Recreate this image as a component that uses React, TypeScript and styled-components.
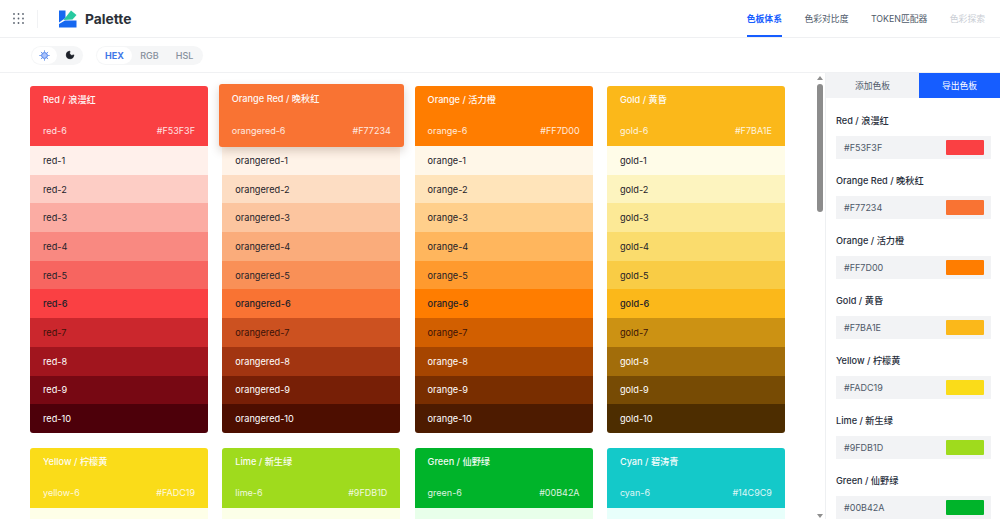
import styled, { createGlobalStyle } from "styled-components";
import { Moon } from "lucide-react";

const GlobalStyle = createGlobalStyle`
    html, body {
        margin: 0;
        height: 100%;
        background: #fff;
        font-family: Inter, "Noto Sans CJK SC", sans-serif;
    }
    #root {
        height: 100%;
    }
`;

const palettes = [
    { key: "red", title: "Red / 浪漫红", hex: "#F53F3F", fill: "#FA4043", shades: ["#FFF0EB", "#FDCDC5", "#FBACA3", "#F98981", "#F76560", "#FA4043", "#CB272D", "#A1151E", "#770813", "#4D000A"] },
    { key: "orangered", title: "Orange Red / 晚秋红", hex: "#F77234", fill: "#F97333", shades: ["#FFF3E8", "#FDDDC3", "#FCC59F", "#FAAC7B", "#F99057", "#F97333", "#CC5120", "#A23511", "#771F06", "#4D0E00"] },
    { key: "orange", title: "Orange / 活力橙", hex: "#FF7D00", fill: "#FF7D00", shades: ["#FFF7E8", "#FFE4BA", "#FFCF8B", "#FFB65D", "#FF9A2E", "#FF7D00", "#D25F00", "#A64500", "#792E00", "#4D1B00"] },
    { key: "gold", title: "Gold / 黄昏", hex: "#F7BA1E", fill: "#FBB81A", shades: ["#FFFCE8", "#FDF4BF", "#FCE996", "#FADC6D", "#F9CC45", "#FBB81A", "#CC9213", "#A26D0A", "#774B04", "#4D2D00"] },
    { key: "yellow", title: "Yellow / 柠檬黄", hex: "#FADC19", fill: "#FADC19", shades: ["#FEFFE8"] },
    { key: "lime", title: "Lime / 新生绿", hex: "#9FDB1D", fill: "#9FDB1D", shades: ["#FCFFE8"] },
    { key: "green", title: "Green / 仙野绿", hex: "#00B42A", fill: "#00B42A", shades: ["#E8FFEA"] },
    { key: "cyan", title: "Cyan / 碧涛青", hex: "#14C9C9", fill: "#14C9C9", shades: ["#E8FFFB"] },
];

const Page = styled.div`
    display: flex;
    flex-direction: column;
    height: 519px;
    overflow: hidden;
`;

// Header
const Header = styled.header`
    display: flex;
    align-items: center;
    justify-content: space-between;
    height: 37px;
    padding: 0 15px 0 13px;
    border-bottom: 1px solid #eff0f2;
    flex-shrink: 0;
`;

const Brand = styled.div`
    display: flex;
    align-items: center;
`;

const Divider = styled.span`
    width: 1px;
    height: 18px;
    margin: 0 21px 0 13px;
    background: #f1f2f4;
`;

const BrandName = styled.span`
    margin-left: 8px;
    font-size: 13.8px;
    font-weight: 700;
    color: #2b3038;
`;

const Nav = styled.nav`
    display: flex;
    gap: 22.5px;
    height: 100%;
`;

const NavItem = styled.a<{ $active?: boolean; $disabled?: boolean }>`
    display: flex;
    align-items: center;
    font-size: 8.8px;
    font-weight: ${({ $active }) => ($active ? 600 : 400)};
    color: ${({ $active, $disabled }) => ($active ? "#165dff" : $disabled ? "#c9cdd4" : "#4e5969")};
    box-shadow: ${({ $active }) => ($active ? "inset 0 -2px 0 #165dff" : "none")};
`;

// Toolbar
const Toolbar = styled.div`
    display: flex;
    align-items: center;
    gap: 13px;
    height: 34px;
    padding-left: 31px;
    border-bottom: 1px solid #f0f1f3;
    flex-shrink: 0;
`;

const Segment = styled.div`
    display: flex;
    align-items: center;
    height: 19px;
    padding: 0 1px;
    border-radius: 10px;
    background: #f5f6f7;
`;

const SegmentItem = styled.button<{ $active?: boolean; $wide?: boolean }>`
    display: flex;
    align-items: center;
    justify-content: center;
    width: ${({ $wide }) => ($wide ? "35px" : "25px")};
    height: 17px;
    padding: 0;
    border: 0;
    border-radius: 9px;
    font-family: inherit;
    font-size: 9px;
    font-weight: ${({ $active }) => ($active ? 700 : 500)};
    color: ${({ $active }) => ($active ? "#3f78e8" : "#86909c")};
    background: ${({ $active }) => ($active ? "#fff" : "transparent")};
`;

// Body
const Body = styled.div`
    display: flex;
    flex: 1;
    min-height: 0;
`;

const Main = styled.main`
    flex: 1;
    min-width: 0;
    overflow: hidden;
    padding: 13px 30px 0;
`;

const Grid = styled.div`
    display: grid;
    grid-template-columns: repeat(4, 178px);
    column-gap: 14.3px;
    row-gap: 15px;
`;

const Card = styled.section`
    display: flex;
    flex-direction: column;
    border-radius: 3px;
`;

const CardHead = styled.div<{ $bg: string; $raised?: boolean }>`
    position: relative;
    z-index: ${({ $raised }) => ($raised ? 1 : 0)};
    display: flex;
    flex-direction: column;
    justify-content: space-between;
    height: ${({ $raised }) => ($raised ? "63px" : "60px")};
    margin: ${({ $raised }) => ($raised ? "-2px -3.5px -1px" : "0")};
    padding: ${({ $raised }) => ($raised ? "8px 13px 9px" : "7px 13px 8px")};
    box-sizing: border-box;
    border-radius: 3px 3px ${({ $raised }) => ($raised ? "3px 3px" : "0 0")};
    background: ${({ $bg }) => $bg};
    box-shadow: ${({ $raised }) => ($raised ? "0 4px 10px rgba(80, 50, 30, 0.22)" : "none")};
    color: #fff;
`;

const CardTitle = styled.div`
    font-size: 9.2px;
    line-height: 14px;
    font-weight: 500;
    opacity: 0.95;
`;

const CardMeta = styled.div`
    display: flex;
    justify-content: space-between;
    font-size: 9px;
    line-height: 14px;
    opacity: 0.85;
`;

const ShadeRow = styled.div<{ $bg: string; $light: boolean; $base?: boolean; $dim?: boolean }>`
    display: flex;
    align-items: center;
    height: 28.7px;
    padding-left: 13px;
    font-size: 9.2px;
    background: ${({ $bg }) => $bg};
    color: ${({ $light, $dim }) => ($light ? "#fff" : $dim ? "#3b1208" : "#1d2129")};
    font-weight: ${({ $base }) => ($base ? 500 : 400)};

    &:last-child {
        border-radius: 0 0 3px 3px;
    }
`;

// Scrollbar
const ScrollTrack = styled.div`
    display: flex;
    flex-direction: column;
    align-items: center;
    width: 10px;
    flex-shrink: 0;
    padding: 3px 0 1px;
    box-sizing: border-box;
    background: #fff;
`;

const ScrollArrow = styled.span<{ $down?: boolean }>`
    width: 0;
    height: 0;
    border-left: 3px solid transparent;
    border-right: 3px solid transparent;
    border-bottom: ${({ $down }) => ($down ? "0" : "4px solid #8f8f8f")};
    border-top: ${({ $down }) => ($down ? "4px solid #8f8f8f" : "0")};
    margin-top: ${({ $down }) => ($down ? "auto" : "0")};
`;

const ScrollThumb = styled.span`
    width: 6px;
    height: 128px;
    margin-top: 4px;
    border-radius: 3px;
    background: #8c8c8c;
`;

// Sidebar
const Side = styled.aside`
    display: flex;
    flex-direction: column;
    width: 175px;
    flex-shrink: 0;
    overflow: hidden;
    border-left: 1px solid #eef0f2;
    box-sizing: border-box;
`;

const SideTabs = styled.div`
    display: grid;
    grid-template-columns: 93px 1fr;
    height: 25px;
    flex-shrink: 0;
`;

const SideTab = styled.button<{ $active?: boolean }>`
    padding: 0;
    border: 0;
    font-family: inherit;
    font-size: 8.8px;
    color: ${({ $active }) => ($active ? "#fff" : "#4e5969")};
    background: ${({ $active }) => ($active ? "#165dff" : "#f2f3f5")};
`;

const SideList = styled.div`
    display: flex;
    flex-direction: column;
    gap: 15px;
    padding: 16px 9px 0 10px;
`;

const SideGroup = styled.div`
    display: flex;
    flex-direction: column;
    gap: 8px;
`;

const SideTitle = styled.div`
    font-size: 9.2px;
    line-height: 14px;
    font-weight: 500;
    color: #272e3b;
`;

const ColorField = styled.div`
    display: flex;
    align-items: center;
    justify-content: space-between;
    height: 23px;
    padding: 0 7px 0 8px;
    background: #f2f3f5;
    font-size: 9px;
    color: #4e5969;
`;

const Swatch = styled.span<{ $bg: string }>`
    width: 38px;
    height: 15px;
    border-radius: 1px;
    background: ${({ $bg }) => $bg};
`;

const GridIcon = () => (
    <svg width="11" height="11" viewBox="0 0 11 11" fill="#5c6470">
        {[1, 5.5, 10].map((y) =>
            [1, 5.5, 10].map((x) => <circle key={`${x}-${y}`} cx={x} cy={y} r="0.9" />)
        )}
    </svg>
);

const Logo = () => (
    <svg width="18" height="18" viewBox="0 0 18 18">
        <path d="M0 0.5h6.5v7.5L0 12.5z" fill="#1668f0" />
        <path d="M4.5 10L12 0.5L17.5 5L13.5 9.5z" fill="#27c9a0" />
        <path d="M0 14L6 10.5H17.5V17.5H0z" fill="#1668f0" />
    </svg>
);

const SunIcon = () => (
    <svg width="11" height="11" viewBox="0 0 12 12" fill="none" stroke="#3f78e8" strokeWidth="1">
        <circle cx="6" cy="6" r="3.2" fill="#a9c2fb" />
        <path d="M6 .5v1.4M6 10.1v1.4M.5 6h1.4M10.1 6h1.4M2.1 2.1l1 1M8.9 8.9l1 1M2.1 9.9l1-1M8.9 3.1l1-1" />
    </svg>
);

export default function App() {
    return (
        <Page>
            <GlobalStyle />
            <Header>
                <Brand>
                    <GridIcon />
                    <Divider />
                    <Logo />
                    <BrandName>Palette</BrandName>
                </Brand>
                <Nav>
                    <NavItem $active>色板体系</NavItem>
                    <NavItem>色彩对比度</NavItem>
                    <NavItem>TOKEN匹配器</NavItem>
                    <NavItem $disabled>色彩探索</NavItem>
                </Nav>
            </Header>
            <Toolbar>
                <Segment>
                    <SegmentItem $active><SunIcon /></SegmentItem>
                    <SegmentItem><Moon size={10} fill="#1d2129" color="#1d2129" /></SegmentItem>
                </Segment>
                <Segment>
                    <SegmentItem $active $wide>HEX</SegmentItem>
                    <SegmentItem $wide>RGB</SegmentItem>
                    <SegmentItem $wide>HSL</SegmentItem>
                </Segment>
            </Toolbar>
            <Body>
                <Main>
                    <Grid>
                        {palettes.map((p) => (
                            <Card key={p.key}>
                                <CardHead $bg={p.fill} $raised={p.key === "orangered"}>
                                    <CardTitle>{p.title}</CardTitle>
                                    <CardMeta>
                                        <span>{p.key}-6</span>
                                        <span>{p.hex}</span>
                                    </CardMeta>
                                </CardHead>
                                {p.shades.map((bg, i) => (
                                    <ShadeRow key={bg} $bg={bg} $light={i >= 7} $base={i === 5} $dim={i === 6}>
                                        {p.shades.length > 1 && `${p.key}-${i + 1}`}
                                    </ShadeRow>
                                ))}
                            </Card>
                        ))}
                    </Grid>
                </Main>
                <ScrollTrack>
                    <ScrollArrow />
                    <ScrollThumb />
                    <ScrollArrow $down />
                </ScrollTrack>
                <Side>
                    <SideTabs>
                        <SideTab>添加色板</SideTab>
                        <SideTab $active>导出色板</SideTab>
                    </SideTabs>
                    <SideList>
                        {palettes.slice(0, 7).map((p) => (
                            <SideGroup key={p.key}>
                                <SideTitle>{p.title}</SideTitle>
                                <ColorField>
                                    <span>{p.hex}</span>
                                    <Swatch $bg={p.fill} />
                                </ColorField>
                            </SideGroup>
                        ))}
                    </SideList>
                </Side>
            </Body>
        </Page>
    );
}
